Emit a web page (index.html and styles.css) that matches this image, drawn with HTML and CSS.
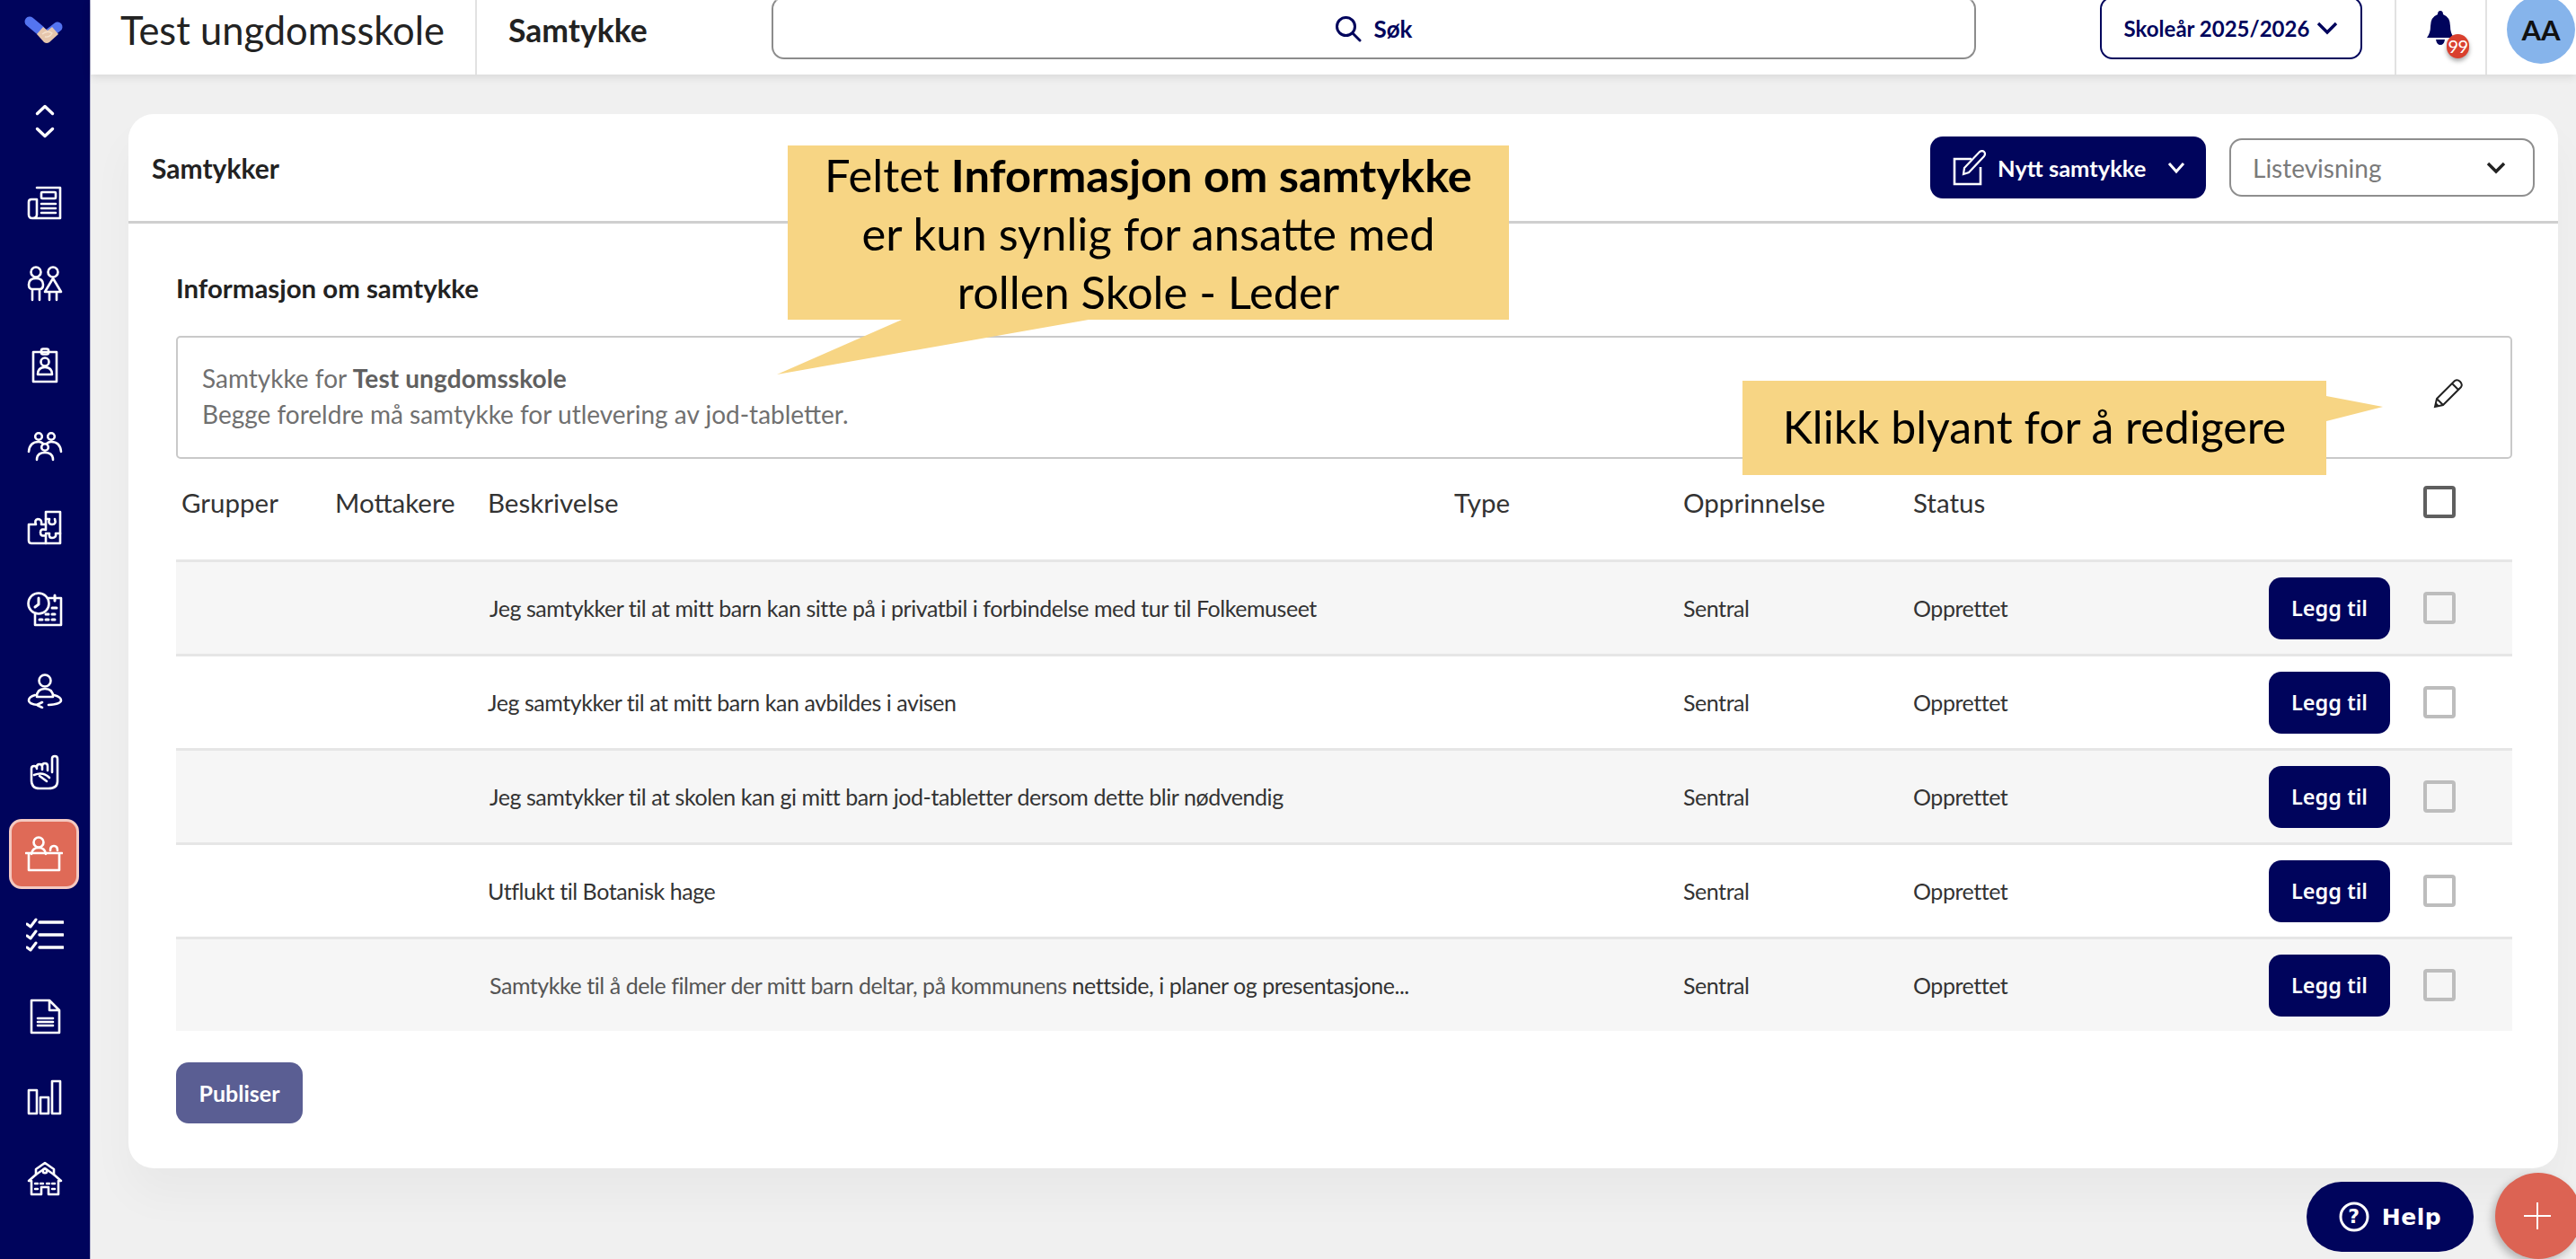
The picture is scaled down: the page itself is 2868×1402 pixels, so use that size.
FILE: index.html
```html
<!DOCTYPE html>
<html lang="no">
<head>
<meta charset="utf-8">
<title>Samtykke</title>
<link rel="stylesheet" href="styles.css">
</head>
<body>
<div class="app">
  <aside class="sidebar">
    <div class="logo">
      <svg width="70" height="50" viewBox="0 0 70 50"><path d="M18 14 L30 24" stroke="#5474f0" stroke-width="11" stroke-linecap="round"/><path d="M49 20 L40 27" stroke="#5474f0" stroke-width="11" stroke-linecap="round"/><path d="M26 28 L33 20 L38 24 L43 20 L50 28 L40 37 Q37 39 34 37 Z" fill="#e6c6ac"/><path d="M32 28 Q38 23 43 27 Q40 32 35 31" fill="none" stroke="#f5e3d0" stroke-width="1.4"/></svg>
    </div>
    <nav class="nav">
      <a class="nav-item"><svg class="ico" width="40" height="40" viewBox="0 0 40 40"><path d="M11.5 11.5 L20 3.5 L28.5 11.5 M11.5 28.5 L20 36.5 L28.5 28.5" stroke-width="3.4"/></svg></a>
      <a class="nav-item"><svg class="ico" width="40" height="40" viewBox="0 0 40 40"><path d="M11 3 H37 V37 H6 Q2 37 2 33 V19 Q2 16 5 16 H11 M11 16 V33 Q11 37 6 37"/><rect x="16" y="8" width="16" height="7" rx="1"/><path d="M16 21 H32 M16 26 H32 M16 31 H32"/></svg></a>
      <a class="nav-item"><svg class="ico" width="40" height="40" viewBox="0 0 40 40"><circle cx="10" cy="7" r="5.5"/><path d="M2 21 Q2 14 10 14 Q18 14 18 21 Q18 26 14 26 H6 Q2 26 2 21 Z M6 26 V38 M14 26 V38"/><circle cx="29" cy="7" r="5.5"/><path d="M29 14 L38 29 H20 Z M25 29 V38 M33 29 V38"/></svg></a>
      <a class="nav-item"><svg class="ico" width="40" height="40" viewBox="0 0 40 40"><rect x="7" y="5" width="26" height="33"/><rect x="16" y="1.5" width="8" height="6" rx="2"/><circle cx="20" cy="16" r="4.5"/><path d="M12 30 Q12 22 20 22 Q28 22 28 30 Z"/></svg></a>
      <a class="nav-item"><svg class="ico" width="40" height="40" viewBox="0 0 40 40"><circle cx="13" cy="8" r="3.8"/><circle cx="27" cy="8" r="3.8"/><circle cx="20" cy="20" r="3.8"/><path d="M2 25 Q3 14 13 14 Q16 14 18 16 M38 25 Q37 14 27 14 Q24 14 22 16 M11 34 Q11 26 20 26 Q29 26 29 34"/></svg></a>
      <a class="nav-item"><svg class="ico" width="40" height="40" viewBox="0 0 40 40"><path d="M21 10 V2 H37 V37 H5 Q2 37 2 34 V16 H10 Q8 11 12 10 Q17 10 16 16 H21 V10"/><path d="M21 16 V22 Q15 20 15 25 Q15 30 21 28 V37 M21 10 H25 Q23 16 28 16 Q33 16 31 10 M37 26 H32 Q33 31 28 31 Q24 31 25 26 H21"/></svg></a>
      <a class="nav-item"><svg class="ico" width="40" height="40" viewBox="0 0 40 40"><circle cx="13" cy="13" r="11.5"/><path d="M13 7 V14 L9 17" stroke-width="3"/><path d="M24 7 H38 V37 H9 V25"/><path d="M31 4 V10" stroke-width="3"/><path d="M14 31 H17 M21 31 H24 M28 31 H31 M21 25 H24 M28 25 H31 M28 18 H33" stroke-width="3"/></svg></a>
      <a class="nav-item"><svg class="ico" width="40" height="40" viewBox="0 0 40 40"><circle cx="20" cy="9" r="6.5"/><path d="M11 27 Q11 18 20 18 Q29 18 29 27 Z"/><path d="M9 25 Q2 27 2 31 Q2 35 12 36 M30 25 Q38 27 38 31 Q38 35 24 36 M17 33 L11 36 L17 39"/></svg></a>
      <a class="nav-item"><svg class="ico" width="40" height="40" viewBox="0 0 40 40"><path d="M28 20 V5 Q28 2 31 2 Q34 2 34 5 V30 Q34 38 24 38 H14 Q5 38 5 29 V16 Q5 13 8 13 Q11 13 11 16 M11 14 Q11 11 14 11 Q17 11 17 14 V17 M17 13 Q17 10 20 10 Q23 10 23 13 V18 M8 23 Q18 19 25 26 M14 24 L22 30"/></svg></a>
      <a class="nav-item is-active"><svg class="ico" width="42" height="42" viewBox="0 0 42 42"><circle cx="15" cy="8" r="5.5"/><path d="M7 21 Q8 14 15 14 Q22 14 23 21"/><path d="M28 17 Q28 12 32 12 Q36 12 36 17"/><path d="M1 20 H41 M4 20 V39 H38 V20"/></svg></a>
      <a class="nav-item"><svg class="ico ico-wide" width="42" height="40" viewBox="0 0 42 40"><path d="M15 6 H41 M15 20 H41 M15 34 H41" stroke-width="3.4"/><path d="M1 8 L5 11 L11 3 M1 21 L5 24 L11 16 M1 34 L5 37 L11 29" stroke-width="3"/></svg></a>
      <a class="nav-item"><svg class="ico" width="40" height="40" viewBox="0 0 40 40"><path d="M5 2 H25 L36 13 V38 H5 Z M25 2 V13 H36"/><path d="M12 22 H29 M12 26 H29 M12 30 H29"/></svg></a>
      <a class="nav-item"><svg class="ico" width="40" height="40" viewBox="0 0 40 40"><rect x="2" y="12" width="9" height="26"/><rect x="15" y="20" width="9" height="18"/><rect x="28" y="2" width="9" height="36"/></svg></a>
      <a class="nav-item"><svg class="ico" width="40" height="40" viewBox="0 0 40 40"><path d="M20 2 L30 9 V15 L38 22 H35 V37 H24 V29 H16 V37 H5 V22 H2 L10 15 V9 Z"/><circle cx="20" cy="11" r="2.2"/><path d="M10 15 L20 8 L30 15 M9 25 H12 M15 25 H18 M22 25 H25 M28 25 H31 M9 31 H12 M28 31 H31" stroke-width="2.4"/></svg></a>
    </nav>
  </aside>

  <div class="page">
    <header class="topbar">
      <div class="school">Test ungdomsskole</div>
      <div class="crumb">Samtykke</div>
      <div class="search">
        <svg class="search-ico" width="30" height="30" viewBox="0 0 30 30"><circle cx="12.5" cy="12.5" r="10"/><path d="M20 20 L28 28"/></svg>
        <span>Søk</span>
      </div>
      <button class="year">Skoleår 2025/2026
        <svg width="24" height="16" viewBox="0 0 24 16"><path d="M2 3 L12 13 L22 3"/></svg>
      </button>
      <div class="bell">
        <svg width="30" height="38" viewBox="0 0 30 38"><path d="M15 0 Q18 0 18 4 Q26 7 26 17 Q26 25 30 30 H0 Q4 25 4 17 Q4 7 12 4 Q12 0 15 0 Z M10 32 H20 Q19 38 15 38 Q11 38 10 32 Z" fill="#00045c"/></svg>
        <span class="badge">99</span>
      </div>
      <div class="user"><div class="avatar">AA</div></div>
    </header>

    <main class="main">
      <section class="card">
        <div class="card-head">
          <h1 class="card-title">Samtykker</h1>
          <button class="btn-new">
            <svg width="38" height="40" viewBox="0 0 38 40"><path d="M21 10 H2 V38 H31 V19" fill="none" stroke="#fff" stroke-width="2.6"/><path d="M12 27 L13 20 L30 2 Q33 0 35 2 Q37 4 35 7 L18 25 Z" fill="none" stroke="#fff" stroke-width="2.2"/></svg>
            <span>Nytt samtykke</span>
            <svg class="chev" width="20" height="14" viewBox="0 0 20 14"><path d="M2 2 L10 11 L18 2"/></svg>
          </button>
          <div class="select">
            <span>Listevisning</span>
            <svg width="22" height="14" viewBox="0 0 22 14"><path d="M2 2 L11 11 L20 2"/></svg>
          </div>
        </div>
        <div class="card-body">
          <h2 class="section-title">Informasjon om samtykke</h2>
          <div class="info">
            <div>
              <p class="info-line">Samtykke for <b>Test ungdomsskole</b></p>
              <p class="info-line">Begge foreldre må samtykke for utlevering av jod-tabletter.</p>
            </div>
            <svg class="pencil" width="34" height="34" viewBox="0 0 34 34"><path d="M2 32 L4 23 L24 3 Q27 1 30 4 Q33 7 31 10 L11 30 Z M4 23 L11 30 M21 6 L28 13" fill="none" stroke="#222" stroke-width="2"/><path d="M2 32 L3 27 L7 31 Z" fill="#222"/></svg>
          </div>

          <div class="tr th">
            <div>Grupper</div><div>Mottakere</div><div>Beskrivelse</div><div>Type</div><div>Opprinnelse</div><div>Status</div><div></div><div class="cell-check"><span class="check check-head"></span></div>
          </div>
          <div class="tr row odd">
            <div></div><div></div><div class="desc nudge">Jeg samtykker til at mitt barn kan sitte på i privatbil i forbindelse med tur til Folkemuseet</div><div></div><div>Sentral</div><div>Opprettet</div><div class="cell-btn"><button class="add">Legg til</button></div><div class="cell-check"><span class="check"></span></div>
          </div>
          <div class="tr row">
            <div></div><div></div><div class="desc">Jeg samtykker til at mitt barn kan avbildes i avisen</div><div></div><div>Sentral</div><div>Opprettet</div><div class="cell-btn"><button class="add">Legg til</button></div><div class="cell-check"><span class="check"></span></div>
          </div>
          <div class="tr row odd">
            <div></div><div></div><div class="desc nudge">Jeg samtykker til at skolen kan gi mitt barn jod-tabletter dersom dette blir nødvendig</div><div></div><div>Sentral</div><div>Opprettet</div><div class="cell-btn"><button class="add">Legg til</button></div><div class="cell-check"><span class="check"></span></div>
          </div>
          <div class="tr row">
            <div></div><div></div><div class="desc">Utflukt til Botanisk hage</div><div></div><div>Sentral</div><div>Opprettet</div><div class="cell-btn"><button class="add">Legg til</button></div><div class="cell-check"><span class="check"></span></div>
          </div>
          <div class="tr row odd">
            <div></div><div></div><div class="desc nudge muted">Samtykke til å dele filmer der mitt barn deltar, på kommunens <span class="dark">nettside, i planer og presentasjone...</span></div><div></div><div>Sentral</div><div>Opprettet</div><div class="cell-btn"><button class="add">Legg til</button></div><div class="cell-check"><span class="check"></span></div>
          </div>
          <button class="publish">Publiser</button>
        </div>
      </section>
    </main>
  </div>

  <div class="callout callout-info">
    <svg class="tail" width="360" height="62" viewBox="0 0 360 62"><polygon points="139,0 0,61 347,0"/></svg>
    <p>Feltet <b>Informasjon om samtykke</b><br>er kun synlig for ansatte med<br>rollen Skole - Leder</p>
  </div>
  <div class="callout callout-edit">
    <svg class="tail" width="64" height="30" viewBox="0 0 64 30"><polygon points="0,1 63,13 0,29"/></svg>
    <p>Klikk blyant for å redigere</p>
  </div>

  <button class="help">
    <svg width="34" height="34" viewBox="0 0 34 34"><circle cx="17" cy="17" r="15" fill="none" stroke="#fff" stroke-width="3"/><text x="17" y="24" text-anchor="middle" class="help-q">?</text></svg>
    <span>Help</span>
  </button>
  <button class="fab"><svg width="32" height="32" viewBox="0 0 32 32"><path d="M16 1 V31 M1 16 H31" stroke="#fff" stroke-width="2"/></svg></button>
</div>
</body>
</html>
```

FILE: styles.css
```css
* { box-sizing: border-box; }
html, body { margin: 0; padding: 0; height: 100%; overflow: hidden; }
body { font-family: Lato, "Noto Sans", sans-serif; color: #222; background: #f0f0f0; }
button { font-family: inherit; border: 0; padding: 0; }
p, h1, h2 { margin: 0; }

.app { position: relative; display: flex; width: 2868px; height: 1402px; overflow: hidden; }

.sidebar { flex: 0 0 101px; background: #00045c; border-right: 1px solid #b5b6d0; display: flex; flex-direction: column; align-items: stretch; }
.logo { height: 90px; display: flex; align-items: center; justify-content: center; padding-bottom: 20px; }
.nav { display: flex; flex-direction: column; }
.nav-item { height: 90.6px; display: flex; align-items: center; justify-content: center; }
.nav-item.is-active { height: 78px; margin: 6.3px 12px 6.3px 10px; background: #df6a57; border: 3px solid #f4c9c1; border-radius: 14px; }
.ico { fill: none; stroke: #fff; stroke-width: 2.6; stroke-linecap: round; stroke-linejoin: round; }

.page { flex: 1; display: flex; flex-direction: column; min-width: 0; }
.topbar { height: 83px; flex: none; background: #fff; display: flex; align-items: center; box-shadow: 0 2px 10px rgba(0,0,0,.12); position: relative; z-index: 1; }
.school { width: 430px; height: 83px; padding-left: 33px; border-right: 2px solid #e2e2e2; font-size: 43.5px; line-height: 66px; color: #222; white-space: nowrap; }
.crumb { width: 328px; padding-left: 35px; font-size: 35.5px; font-weight: 700; line-height: 68px; height: 83px; }
.search { width: 1341px; height: 70px; margin-top: -21px; margin-right: 138px; border: 2px solid #8c8c8c; border-top-color: #bbb; border-radius: 14px; display: flex; align-items: center; justify-content: center; gap: 13px; font-size: 26px; font-weight: 700; color: #00045c; padding-top: 2px; }
.search-ico { fill: none; stroke: #00045c; stroke-width: 3; stroke-linecap: round; }
.year { width: 292px; height: 70px; margin-top: -21px; background: #fff; border: 2px solid #00045c; border-radius: 14px; color: #00045c; font-size: 24px; font-weight: 700; display: flex; align-items: center; justify-content: center; gap: 8px; white-space: nowrap; }
.year svg { fill: none; stroke: #00045c; stroke-width: 3.4; }
.bell { position: relative; width: 103px; height: 83px; margin-left: 36px; border-left: 2px solid #e2e2e2; border-right: 2px solid #e2e2e2; display: flex; justify-content: center; padding-top: 12px; padding-right: 2px; }
.badge { position: absolute; left: 56px; top: 38px; width: 25px; height: 27px; border-radius: 13px; background: #d9402e; color: #fff; font-size: 20px; line-height: 27px; text-align: center; box-shadow: 0 3px 5px rgba(0,0,0,.35); letter-spacing: -.5px; }
.user { flex: 1; height: 83px; position: relative; }
.avatar { position: absolute; left: 22px; top: -5px; width: 76px; height: 76px; border-radius: 50%; background: #86b4eb; color: #111; font-size: 31px; font-weight: 700; display: flex; align-items: center; justify-content: center; }

.main { flex: 1; padding: 44px 20px 0 42px; }
.card { height: 1174px; border-radius: 28px; background: #fff; box-shadow: 0 30px 50px rgba(0,0,0,.035); }
.card-head { height: 122px; border-bottom: 3px solid #cfcfcf; display: flex; align-items: center; padding: 0 26px 0 26px; }
.card-title { font-size: 30px; font-weight: 700; line-height: 1; flex: 1; color: #222; }
.btn-new { width: 307px; height: 69px; margin-right: 26px; background: #00045c; color: #fff; border-radius: 14px; display: flex; align-items: center; padding-left: 25px; font-size: 25.5px; font-weight: 700; white-space: nowrap; }
.btn-new span { margin-left: 12px; }
.chev { margin-left: 24px; fill: none; stroke: #fff; stroke-width: 3; }
.select { width: 340px; height: 65px; border: 2px solid #8e8e8e; border-radius: 14px; display: flex; align-items: center; justify-content: space-between; padding: 0 30px 0 24px; color: #7a7a7a; font-size: 28px; }
.select svg { fill: none; stroke: #222; stroke-width: 3.4; }

.card-body { padding: 52px 51px 0 53px; }
.section-title { font-size: 29.4px; font-weight: 700; line-height: 40px; height: 73px; color: #222; }
.info { height: 137px; border: 2px solid #c9c9c9; border-radius: 5px; padding: 0 52px 2px 27px; display: flex; align-items: center; justify-content: space-between; color: #707070; font-size: 28px; }
.info-line { line-height: 41px; margin-top: -1px; }
.info-line b { font-weight: 700; color: #606060; letter-spacing: .1px; }
.pencil { margin-top: -8px; }

.tr { display: grid; grid-template-columns: 171px 170px 1076px 255px 256px 396px 1fr 99px; align-items: center; padding-left: 6px; }
.th { height: 112px; font-size: 29.5px; color: #333; padding-bottom: 16px; }
.row { height: 105px; border-top: 3px solid #e6e6e6; font-size: 25px; letter-spacing: -.45px; color: #333; }
.odd { background: #f6f6f6; }
.desc { white-space: nowrap; }
.nudge { padding-left: 2px; }
.muted { color: #555; }
.dark { color: #333; }
.cell-btn { display: flex; }
.add { width: 135px; height: 69px; background: #00045c; color: #fff; border-radius: 14px; font-family: "Noto Sans", sans-serif; font-size: 23.5px; font-weight: 600; letter-spacing: 0; }
.cell-check { display: flex; justify-content: flex-start; }
.check { width: 36px; height: 36px; border: 4px solid #bdbdbd; border-radius: 4px; background: transparent; }
.check-head { border-color: #5f5f5f; }
.publish { display: block; width: 141px; height: 68px; margin-top: 35px; background: #5a5e93; color: #fff; border-radius: 14px; font-size: 25px; font-weight: 700; }

.callout { position: absolute; background: #f7d584; color: #000; font-family: Lato, sans-serif; text-align: center; z-index: 3; }
.callout .tail { position: absolute; fill: #f7d584; overflow: visible; }
.callout-info { left: 877px; top: 162px; width: 803px; height: 194px; font-size: 50.6px; line-height: 65px; }
.callout-info b { font-weight: 700; }
.callout-info .tail { left: -12px; top: 194px; }
.callout-edit { left: 1940px; top: 424px; width: 650px; height: 105px; font-size: 50px; line-height: 102px; }
.callout-edit .tail { left: 650px; top: 16px; }

.help { position: absolute; left: 2568px; top: 1316px; width: 186px; height: 78px; border-radius: 39px; background: #00045c; color: #fff; display: flex; align-items: center; justify-content: center; gap: 14px; font-family: "DejaVu Sans", sans-serif; font-weight: 700; font-size: 25px; letter-spacing: .5px; z-index: 3; }
.help-q { fill: #fff; font-family: "DejaVu Sans", sans-serif; font-weight: 700; font-size: 22px; }
.fab { position: absolute; left: 2778px; top: 1306px; width: 96px; height: 96px; border-radius: 50%; background: #dc6353; display: flex; align-items: center; justify-content: center; box-shadow: -3px 4px 10px rgba(0,0,0,.25); z-index: 3; padding-right: 2px; }
```
